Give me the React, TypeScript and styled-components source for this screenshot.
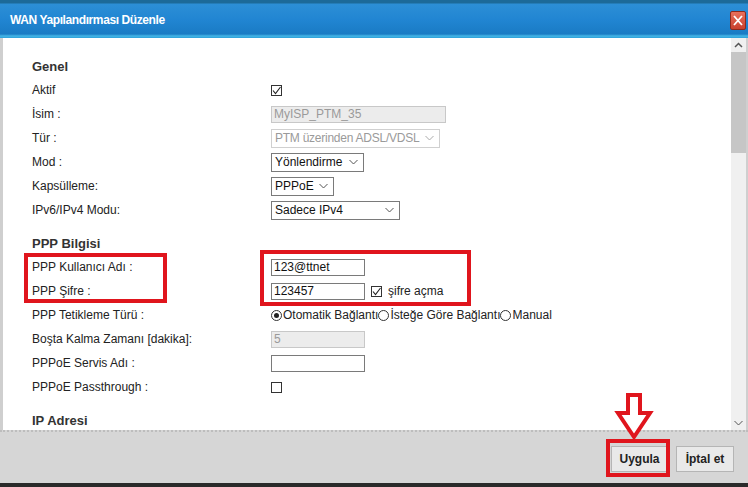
import React from 'react'
import styled, { createGlobalStyle } from 'styled-components'

const GlobalStyle = createGlobalStyle`
  html, body {
    margin: 0;
    padding: 0;
    background: #d4d4d4;
  }
  body {
    font-family: 'Liberation Sans', Arial, sans-serif;
    font-size: 12px;
    color: #222;
  }
`

const Dialog = styled.div`
  width: 748px;
  height: 487px;
  display: flex;
  flex-direction: column;
  overflow: hidden;
  position: relative;
`

const TitleBar = styled.header`
  height: 38px;
  flex: none;
  display: flex;
  align-items: center;
  justify-content: space-between;
  padding: 0 2px 0 10px;
  box-sizing: border-box;
  background: linear-gradient(#1c6a99 0, #1c6a99 3px, #2c8fd6 4px, #2185d2 20px, #1a7bc4 34px, #45b6e6 36px, #2d9fd8 38px);
`

const Title = styled.h1`
  margin: 0;
  font-size: 12px;
  font-weight: bold;
  color: #fff;
  letter-spacing: -0.4px;
  padding-top: 2px;
`

const CloseButton = styled.button`
  width: 16px;
  height: 19px;
  padding: 0;
  margin-top: 2px;
  border: 1px solid #8a2a1e;
  border-radius: 2px;
  background: linear-gradient(#e8705c, #c9402d);
  display: flex;
  align-items: center;
  justify-content: center;
`

const Body = styled.div`
  flex: none;
  height: 392px;
  display: flex;
  background: #fff;
  border-left: 3px solid #cfcfcf;
  border-right: 2px solid #cfcfcf;
`

const Content = styled.div`
  flex: 1;
  position: relative;
  overflow: hidden;
  padding: 19px 0 0 29px;
`

const SectionTitle = styled.h2<{ $gap?: number }>`
  margin: ${(p) => p.$gap ?? 0}px 0 1px;
  height: 20px;
  line-height: 20px;
  font-size: 13px;
  font-weight: bold;
  color: #333;
`

const Row = styled.div`
  height: 24px;
  display: flex;
  align-items: center;
  white-space: nowrap;
`

const Label = styled.span`
  width: 239px;
  flex: none;
  color: #222;
`

const Field = styled.div`
  display: flex;
  align-items: center;
  gap: 6px;
`

const TextBox = styled.div<{ $w: number; $disabled?: boolean }>`
  width: ${(p) => p.$w}px;
  height: 17px;
  box-sizing: border-box;
  border: 1px solid ${(p) => (p.$disabled ? '#c8c8c8' : '#7a7a7a')};
  background: ${(p) => (p.$disabled ? '#ececec' : '#fff')};
  color: ${(p) => (p.$disabled ? '#9a9a9a' : '#111')};
  padding: 0 2px;
  line-height: 15px;
  font-size: 12px;
`

const SelectBox = styled.div<{ $w: number; $disabled?: boolean }>`
  width: ${(p) => p.$w}px;
  height: 19px;
  box-sizing: border-box;
  border: 1px solid ${(p) => (p.$disabled ? '#d0d0d0' : '#7a7a7a')};
  background: #fff;
  color: ${(p) => (p.$disabled ? '#9a9a9a' : '#111')};
  display: flex;
  align-items: center;
  justify-content: space-between;
  gap: 4px;
  padding: 0 5px 0 3px;
  font-size: 12px;
  letter-spacing: ${(p) => (p.$disabled ? '-0.25px' : '0')};
  white-space: nowrap;
  overflow: hidden;
`

const Box = styled.span`
  width: 11px;
  height: 11px;
  box-sizing: border-box;
  border: 1px solid #333;
  background: #fff;
  display: inline-flex;
  align-items: center;
  justify-content: center;
`

const RadioGroup = styled.div`
  display: flex;
  align-items: center;
  font-size: 12px;
  color: #222;
`

const Radio = styled.span<{ $on?: boolean }>`
  width: 11px;
  height: 11px;
  box-sizing: border-box;
  border: 1px solid #333;
  border-radius: 50%;
  display: inline-flex;
  align-items: center;
  justify-content: center;
  margin-right: 1px;
  &::after {
    content: '';
    width: 5px;
    height: 5px;
    border-radius: 50%;
    background: ${(p) => (p.$on ? '#222' : 'transparent')};
  }
`

const Mark = styled.div<{ $x: number; $y: number; $w: number; $h: number }>`
  position: absolute;
  left: ${(p) => p.$x}px;
  top: ${(p) => p.$y}px;
  width: ${(p) => p.$w}px;
  height: ${(p) => p.$h}px;
  box-sizing: border-box;
  border: 4px solid #e0151d;
  pointer-events: none;
`

const Scrollbar = styled.div`
  width: 15px;
  flex: none;
  background: #f0f0f0;
  display: flex;
  flex-direction: column;
  align-items: center;
`

const ScrollArrow = styled.div`
  height: 14px;
  display: flex;
  align-items: center;
  justify-content: center;
`

const Thumb = styled.div`
  width: 15px;
  height: 101px;
  background: #c6c6c6;
`

const Spacer = styled.div`
  flex: 1;
`

const Footer = styled.footer`
  flex: 1;
  background: #d6d6d6;
  border-top: 2px dotted #bdbdbd;
  border-bottom: 4px solid #2a2a2a;
  display: flex;
  justify-content: flex-end;
  align-items: center;
  gap: 8px;
  padding: 3px 14px 0 0;
`

const Button = styled.button<{ $w: number }>`
  width: ${(p) => p.$w}px;
  height: 26px;
  padding: 0;
  border: 1px solid #b5b5b5;
  background: #e9e9e9;
  font-family: 'Liberation Sans', Arial, sans-serif;
  font-size: 12px;
  font-weight: bold;
  color: #222;
`

const ApplyWrap = styled.div`
  position: relative;
  display: flex;
`

const ApplyFrame = styled.span`
  position: absolute;
  left: -5px;
  right: -2px;
  top: -7px;
  bottom: -5px;
  border: 4px solid #e0151d;
  pointer-events: none;
`

const Arrow = styled.svg`
  position: absolute;
  left: 613px;
  top: 391px;
`

const Chevron = ({ color = '#777' }: { color?: string }) => (
  <svg width="9" height="6" viewBox="0 0 9 6">
    <path d="M0.5 1 L4.5 5 L8.5 1" fill="none" stroke={color} strokeWidth="1" />
  </svg>
)

const Check = () => (
  <svg width="9" height="9" viewBox="0 0 9 9">
    <path d="M1 4.5 L3.5 7.5 L8.5 1" fill="none" stroke="#222" strokeWidth="1.1" />
  </svg>
)

const Select = ({ w, value, disabled }: { w: number; value: string; disabled?: boolean }) => (
  <SelectBox $w={w} $disabled={disabled}>
    <span>{value}</span>
    <Chevron color={disabled ? '#aaa' : '#555'} />
  </SelectBox>
)

export default function App() {
  return (
    <Dialog>
      <GlobalStyle />
      <TitleBar>
        <Title>WAN Yapılandırması Düzenle</Title>
        <CloseButton aria-label="Kapat">
          <svg width="10" height="11" viewBox="0 0 10 11">
            <path d="M1 1 L9 10 M9 1 L1 10" stroke="#fff" strokeWidth="1.8" />
          </svg>
        </CloseButton>
      </TitleBar>

      <Body>
        <Content>
          <SectionTitle>Genel</SectionTitle>
          <Row>
            <Label>Aktif</Label>
            <Box>
              <Check />
            </Box>
          </Row>
          <Row>
            <Label>İsim :</Label>
            <TextBox $w={175} $disabled>
              MyISP_PTM_35
            </TextBox>
          </Row>
          <Row>
            <Label>Tür :</Label>
            <Select w={169} value="PTM üzerinden ADSL/VDSL" disabled />
          </Row>
          <Row>
            <Label>Mod :</Label>
            <Select w={93} value="Yönlendirme" />
          </Row>
          <Row>
            <Label>Kapsülleme:</Label>
            <Select w={63} value="PPPoE" />
          </Row>
          <Row>
            <Label>IPv6/IPv4 Modu:</Label>
            <Select w={129} value="Sadece IPv4" />
          </Row>

          <SectionTitle $gap={12}>PPP Bilgisi</SectionTitle>
          <Row>
            <Label>PPP Kullanıcı Adı :</Label>
            <TextBox $w={94}>123@ttnet</TextBox>
          </Row>
          <Row>
            <Label>PPP Şifre :</Label>
            <Field>
              <TextBox $w={94}>123457</TextBox>
              <Box>
                <Check />
              </Box>
              <span>şifre açma</span>
            </Field>
          </Row>
          <Row>
            <Label>PPP Tetikleme Türü :</Label>
            <RadioGroup>
              <Radio $on />
              Otomatik Bağlantı
              <Radio />
              İsteğe Göre Bağlantı
              <Radio />
              Manual
            </RadioGroup>
          </Row>
          <Row>
            <Label>Boşta Kalma Zamanı [dakika]:</Label>
            <TextBox $w={94} $disabled>
              5
            </TextBox>
          </Row>
          <Row>
            <Label>PPPoE Servis Adı :</Label>
            <TextBox $w={94} />
          </Row>
          <Row>
            <Label>PPPoE Passthrough :</Label>
            <Box />
          </Row>

          <SectionTitle $gap={12}>IP Adresi</SectionTitle>

          <Mark $x={21} $y={215} $w={143} $h={50} />
          <Mark $x={257} $y={212} $w={211} $h={56} />
        </Content>
        <Scrollbar>
          <ScrollArrow>
            <svg width="9" height="6" viewBox="0 0 9 6">
              <path d="M1 5 L4.5 1.5 L8 5" fill="none" stroke="#555" strokeWidth="1.5" />
            </svg>
          </ScrollArrow>
          <Thumb />
          <Spacer />
          <ScrollArrow>
            <Chevron color="#555" />
          </ScrollArrow>
        </Scrollbar>
      </Body>

      <Footer>
        <ApplyWrap>
          <Button $w={57}>Uygula</Button>
          <ApplyFrame />
        </ApplyWrap>
        <Button $w={58}>İptal et</Button>
      </Footer>

      <Arrow width="42" height="52" viewBox="0 0 42 52">
        <path
          d="M15 4 L27 4 L27 22 L37 22 L21 46 L5 22 L15 22 Z"
          fill="#fff"
          stroke="#e0151d"
          strokeWidth="4"
          strokeLinejoin="miter"
        />
      </Arrow>
    </Dialog>
  )
}
